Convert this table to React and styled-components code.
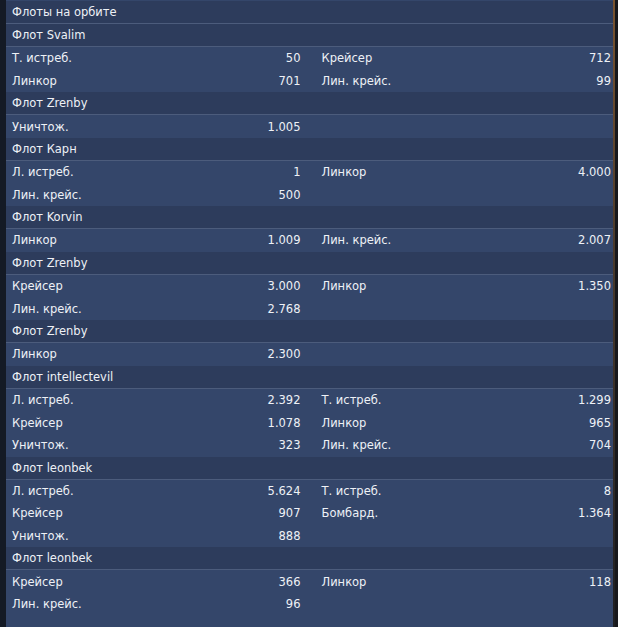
import React from 'react';
import styled, { createGlobalStyle } from 'styled-components';

const GlobalStyle = createGlobalStyle`
  html, body {
    margin: 0;
    padding: 0;
    height: 100%;
    background: #151b26;
  }
  #root {
    height: 100%;
  }
`;

const fleets = [
    { name: 'Svalim', ships: [['Т. истреб.', '50'], ['Крейсер', '712'], ['Линкор', '701'], ['Лин. крейс.', '99']] },
    { name: 'Zrenby', ships: [['Уничтож.', '1.005']] },
    { name: 'Карн', ships: [['Л. истреб.', '1'], ['Линкор', '4.000'], ['Лин. крейс.', '500']] },
    { name: 'Korvin', ships: [['Линкор', '1.009'], ['Лин. крейс.', '2.007']] },
    { name: 'Zrenby', ships: [['Крейсер', '3.000'], ['Линкор', '1.350'], ['Лин. крейс.', '2.768']] },
    { name: 'Zrenby', ships: [['Линкор', '2.300']] },
    {
        name: 'intellectevil',
        ships: [['Л. истреб.', '2.392'], ['Т. истреб.', '1.299'], ['Крейсер', '1.078'], ['Линкор', '965'], ['Уничтож.', '323'], ['Лин. крейс.', '704']],
    },
    {
        name: 'leonbek',
        ships: [['Л. истреб.', '5.624'], ['Т. истреб.', '8'], ['Крейсер', '907'], ['Бомбард.', '1.364'], ['Уничтож.', '888']],
    },
    { name: 'leonbek', ships: [['Крейсер', '366'], ['Линкор', '118'], ['Лин. крейс.', '96']] },
];

const Page = styled.div`
    display: flex;
    height: 100%;
    min-height: 627px;
    font-family: "DejaVu Sans", Verdana, sans-serif;
    font-size: 11.5px;
    color: #eef1f6;
`;

const LeftEdge = styled.div`
    width: 6px;
    flex: none;
    background: #141a25;
`;

const RightEdge = styled.div`
    width: 3px;
    flex: none;
    border-left: 2px solid #6a4b2c;
    border-image: linear-gradient(#7a5430, #4a3a2c 40%, #1f1f22) 1;
    background: #17181c;
`;

const Panel = styled.div`
    flex: 1;
    background: #34466a;
    padding-top: 1px;
`;

const HeadRow = styled.div`
    height: 23px;
    box-sizing: border-box;
    display: flex;
    align-items: center;
    padding-left: 6px;
    background: #2d3c5c;
    border-bottom: 1px solid #4c5c7c;
`;

const ShipGrid = styled.div`
    display: grid;
    grid-template-columns: 1fr 1fr;
    grid-auto-rows: 22.64px;
    column-gap: 20px;
    padding: 0 2px 0 6px;
`;

const Cell = styled.div`
    display: flex;
    align-items: center;
    justify-content: space-between;
    padding-right: ${p => (p.$left ? '1px' : '0')};
`;

const Count = styled.span`
    text-align: right;
`;

const Fleet = ({ fleet }) => (
    <>
        <HeadRow>Флот {fleet.name}</HeadRow>
        <ShipGrid>
            {fleet.ships.map(([kind, count], i) => (
                <Cell key={i} $left={i % 2 === 0}>
                    <span>{kind}</span>
                    <Count>{count}</Count>
                </Cell>
            ))}
        </ShipGrid>
    </>
);

const App = () => (
    <Page>
        <GlobalStyle />
        <LeftEdge />
        <Panel>
            <HeadRow>Флоты на орбите</HeadRow>
            {fleets.map((f, i) => (
                <Fleet key={i} fleet={f} />
            ))}
        </Panel>
        <RightEdge />
    </Page>
);

export default App;
